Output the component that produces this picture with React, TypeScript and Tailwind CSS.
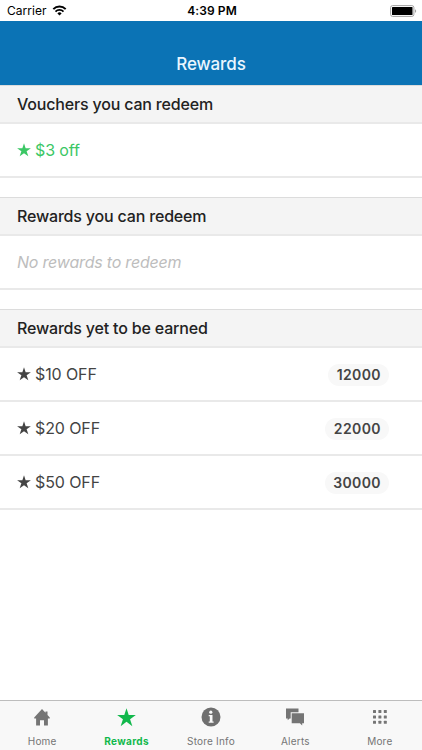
import type { ReactNode } from "react";

const STAR = "M12 .3 14.8 8.8H23.8L16.5 14.1 19.4 22.9 12 17.5 4.6 22.9 7.5 14.1.2 8.8H9.2Z";

function Star({ className }: { className: string }) {
  return (
    <svg viewBox="0 0 24 24" fill="currentColor" className={className}>
      <path d={STAR} />
    </svg>
  );
}

function StatusBar() {
  return (
    <div className="grid h-[21px] grid-cols-3 items-center bg-white pr-[5px] pl-[7px] text-black">
      <div className="flex items-center gap-[5px] pt-px">
        <span className="text-[12px] leading-none tracking-[0.05px]">Carrier</span>
        <svg viewBox="0 0 14 11" className="mb-px h-[11px] w-[15px]" fill="none" stroke="currentColor">
          <path d="M.8 4.1a8.8 8.8 0 0 1 12.4 0" strokeWidth="2" />
          <path d="M3 6.6a5.7 5.7 0 0 1 8 0" strokeWidth="1.8" />
          <path d="M7 10.5 4.9 8.4a3 3 0 0 1 4.2 0Z" fill="currentColor" stroke="none" />
        </svg>
      </div>
      <span className="pt-px text-center text-[12px] leading-none font-semibold tracking-[0.1px]">4:39 PM</span>
      <svg viewBox="0 0 27 12" className="h-[12px] w-[27px] justify-self-end">
        <rect x=".6" y=".6" width="23.3" height="10.8" rx="2" fill="none" stroke="#a3a3a3" />
        <rect x="2" y="2" width="20.5" height="8" rx=".6" fill="#000" />
        <path d="M25 4.2c1.6.5 1.6 3.1 0 3.6Z" fill="#a3a3a3" />
      </svg>
    </div>
  );
}

function Section({ title, children }: { title: string; children: ReactNode }) {
  return (
    <section className="mb-[19px]">
      <h2 className="flex h-[37px] items-center border-t border-[#dcdcdc] bg-[#f4f4f4] px-[17px] pb-px text-[16px] font-medium tracking-[-0.18px] text-[#222]">
        {title}
      </h2>
      {children}
    </section>
  );
}

function Row({ children }: { children: ReactNode }) {
  return (
    <div className="flex h-[54px] items-center justify-between border-t-2 border-[#e9e9e9] pr-[33px] pl-[17px] text-[16px] tracking-[-0.1px] last:h-[56px] last:border-b-2">
      {children}
    </div>
  );
}

const rewards = [
  { label: "$10 OFF", points: 12000 },
  { label: "$20 OFF", points: 22000 },
  { label: "$50 OFF", points: 30000 },
];

const tabs = [
  {
    label: "Home",
    icon: (
      <svg viewBox="0 0 18 18" fill="currentColor" className="size-[18px]">
        <path d="M9 1 1.2 9.4v1.2h1.9v6.9H7v-5.3h4v5.3h3.9v-6.9h1.9V9.4l-2.3-2.5V3.4h-2v1.4Z" />
      </svg>
    ),
  },
  { label: "Rewards", icon: <Star className="size-[19px]" />, active: true },
  {
    label: "Store Info",
    icon: (
      <svg viewBox="0 0 20 20" className="size-[20px]">
        <circle cx="10" cy="10" r="9.5" fill="#6f6f6f" />
        <circle cx="9.8" cy="5.2" r="1.6" fill="#f8f8f8" />
        <path d="M7.7 8h3.8v6.5h1.1v1.3H7.7v-1.3h1.1V9.3H7.7Z" fill="#f8f8f8" />
      </svg>
    ),
  },
  {
    label: "Alerts",
    icon: (
      <svg viewBox="0 0 20 20" className="size-[20px]" fill="currentColor">
        <path d="M1 1.5h12.5v3.7H5.7v6.2H4.6L2.7 13.3v-1.9H1Z" />
        <path d="M6.7 6.2H19v10.1h-1.8v2.3l-2.3-2.3H6.7Z" />
      </svg>
    ),
  },
  {
    label: "More",
    icon: (
      <svg viewBox="0 0 14 14" className="size-[14px]" fill="currentColor">
        {[0, 5.4, 10.8].map((y) =>
          [0, 5.4, 10.8].map((x) => <rect key={`${x}-${y}`} x={x} y={y} width="3" height="3" rx=".5" />),
        )}
      </svg>
    ),
  },
];

export default function App() {
  return (
    <div className="flex h-[750px] w-[422px] flex-col overflow-hidden bg-white font-['Inter','Liberation_Sans',sans-serif]">
      <StatusBar />
      <header className="flex h-16 items-end justify-center bg-[#0b73b5] pb-[8px]">
        <h1 className="text-[17px] leading-[25px] font-medium tracking-[-0.1px] text-[#eaf6ff]">Rewards</h1>
      </header>

      <main className="flex-1">
        <Section title="Vouchers you can redeem">
          <Row>
            <span className="flex items-center gap-[4px] text-[#3bc765]">
              <Star className="size-[14px]" />
              $3 off
            </span>
          </Row>
        </Section>

        <Section title="Rewards you can redeem">
          <Row>
            <span className="tracking-[-0.2px] text-[#bdbdbd] italic">No rewards to redeem</span>
          </Row>
        </Section>

        <Section title="Rewards yet to be earned">
          {rewards.map((reward) => (
            <Row key={reward.label}>
              <span className="flex items-center gap-[4px] text-[#444]">
                <Star className="size-[14px]" />
                {reward.label}
              </span>
              <span className="mt-[2px] flex h-[22px] items-center rounded-full bg-[#f8f8f8] pr-2 pb-[2px] pl-[8.5px] text-[14px] font-semibold tracking-[0.4px] text-[#444]">
                {reward.points}
              </span>
            </Row>
          ))}
        </Section>
      </main>

      <nav className="grid h-[50px] grid-cols-5 border-t border-[#bdbdbd] bg-[#f8f8f8]">
        {tabs.map((tab) => (
          <div
            key={tab.label}
            className={`flex flex-col items-center pt-[6px] text-[10px] ${tab.active ? "font-bold tracking-[0.35px] text-[#12b84c]" : "tracking-[0.2px] text-[#757575]"}`}
          >
            <div className="flex h-5 items-center">{tab.icon}</div>
            <span className="mt-[8px] leading-[12px]">{tab.label}</span>
          </div>
        ))}
      </nav>
    </div>
  );
}
